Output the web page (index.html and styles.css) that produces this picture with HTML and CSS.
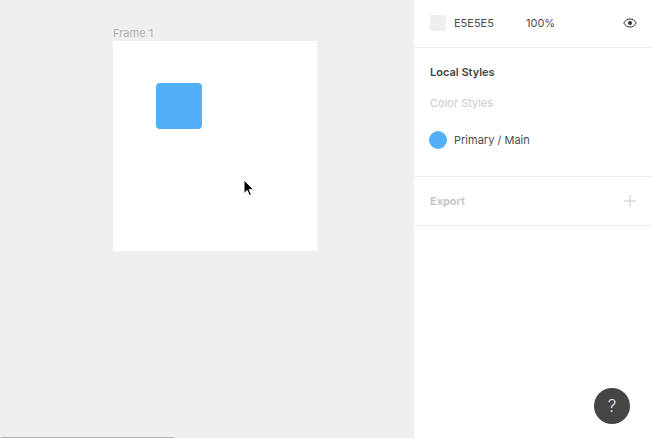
FILE: index.html
```html
<!DOCTYPE html>
<html lang="en">
<head>
<meta charset="utf-8">
<title>Frame editor</title>
<link rel="stylesheet" href="styles.css">
</head>
<body>
<div class="app">
  <main class="canvas">
    <span class="frame-label">Frame 1</span>
    <div class="frame"></div>
    <div class="square"></div>
    <svg class="cursor" width="12" height="18" viewBox="0 0 12 18"><path d="M1 1v13.500l3.200-3 2.200 5 2-.9-2.200-4.900h4.300z" fill="#000" stroke="#fff" stroke-width="1"/></svg>
    <div class="scrollbar"></div>
  </main>
  <aside class="panel">
    <section class="fill-row">
      <span class="swatch"></span>
      <span class="hex">E5E5E5</span>
      <span class="opacity">100%</span>
      <svg class="eye" width="14" height="10" viewBox="0 0 14 10"><path d="M.8 5C2.2 2.400 4.400 1 7 1s4.800 1.400 6.200 4C11.800 7.600 9.600 9 7 9S2.200 7.600.8 5z" fill="none" stroke="#333" stroke-width="1"/><circle cx="7" cy="5" r="2" fill="#333"/></svg>
    </section>
    <section class="styles">
      <h2 class="styles-title">Local Styles</h2>
      <h3 class="styles-sub">Color Styles</h3>
      <div class="style-item">
        <span class="dot"></span>
        <span class="style-name">Primary / Main</span>
      </div>
    </section>
    <section class="export">
      <span class="export-title">Export</span>
      <svg class="plus" width="12" height="12" viewBox="0 0 12 12"><path d="M6 0v12M0 6h12" stroke="#c8c8c8" stroke-width="1"/></svg>
    </section>
    <button class="help" type="button">?</button>
  </aside>
</div>
</body>
</html>
```
FILE: styles.css
```css
* { box-sizing: border-box; }
html, body { margin: 0; height: 100%; }
body { font-family: Inter, "Liberation Sans", sans-serif; overflow: hidden; background: #fff; }
.app { display: flex; width: 652px; height: 438px; }
.canvas { position: relative; width: 413px; background: #efefef; flex: none; }
.frame-label { position: absolute; left: 113px; top: 26px; font-size: 11px; line-height: 14px; color: #b0b0b0; }
.frame { position: absolute; left: 113px; top: 41px; width: 204px; height: 210px; background: #fff; }
.square { position: absolute; left: 156px; top: 83px; width: 46px; height: 46px; border-radius: 4px; background: #53aff8; }
.cursor { position: absolute; left: 243px; top: 179px; }
.scrollbar { position: absolute; left: 1px; bottom: 0; width: 173px; height: 1px; background: #b0b0b0; }
.panel { position: relative; flex: 1; background: #fff; border-left: 1px solid #efefef; }
.fill-row { display: flex; align-items: center; height: 48px; padding: 0 15px 1px 16px; border-bottom: 1px solid #eeeeee; font-size: 11px; color: #4d4d4d; }
.swatch { width: 16px; height: 16px; background: #efefef; margin-right: 8px; }
.hex { width: 72px; }
.opacity { flex: 1; }
.styles { height: 129px; padding: 17px 16px 0; border-bottom: 1px solid #eeeeee; }
.styles-title { margin: 0; font-size: 11px; line-height: 14px; font-weight: 600; color: #444; }
.styles-sub { margin: 17px 0 0; font-size: 11px; line-height: 14px; font-weight: 400; color: #cacaca; }
.style-item { display: flex; align-items: center; gap: 7px; margin-top: 21px; margin-left: -1px; }
.dot { width: 18px; height: 18px; border-radius: 50%; background: #53aff8; }
.style-name { font-size: 11px; line-height: 14px; color: #4d4d4d; }
.export { display: flex; align-items: center; justify-content: space-between; height: 49px; padding: 0 16px; border-bottom: 1px solid #eeeeee; }
.export-title { font-size: 11px; font-weight: 600; color: #c2c2c2; }
.help { position: absolute; left: 180px; top: 388px; width: 36px; height: 36px; padding: 0; border: none; border-radius: 50%; background: #454545; color: #eee; font-family: Inter, "Liberation Sans", sans-serif; font-size: 17px; font-weight: 300; }
```
